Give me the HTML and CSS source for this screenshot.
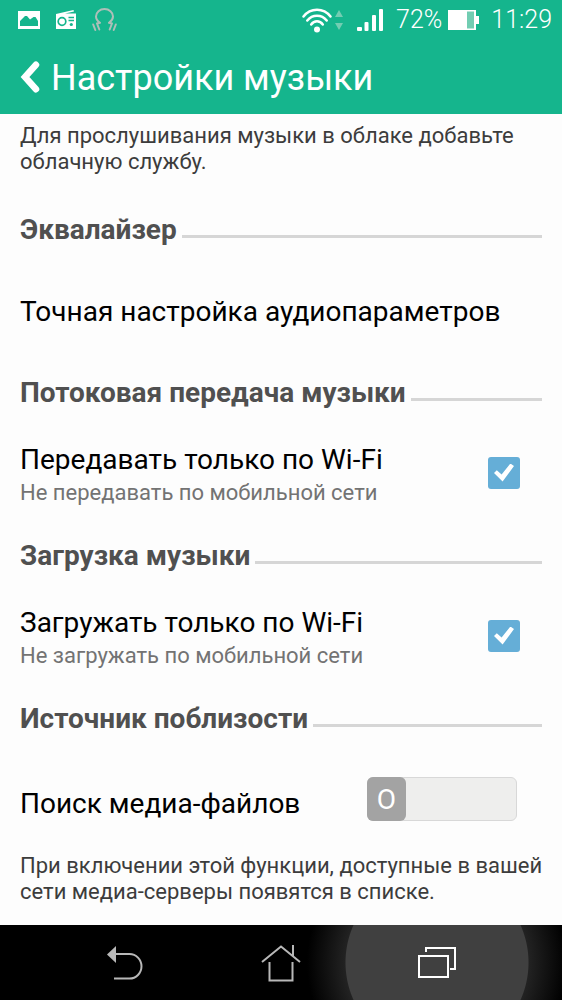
FILE: index.html
```html
<!DOCTYPE html>
<html lang="ru">
<head>
<meta charset="utf-8">
<meta name="viewport" content="width=device-width, initial-scale=1">
<title>Настройки музыки</title>
<link rel="stylesheet" href="styles.css">
</head>
<body>
<header class="top">
  <div class="status">
    <div class="status-left">
      <svg width="22" height="18" viewBox="0 0 22 18" aria-hidden="true"><path fill="#fff" fill-rule="evenodd" d="M0 0h22v18H0zM2 15h18v-5l-2.500-4h-2L12 8.500 9 5H7l-5 5z"/></svg>
      <svg width="20" height="20" viewBox="0 0 20 20" aria-hidden="true"><path fill="#fff" d="M0 4 17.500 0l.5 1.500L9 3.500h11V19H0z"/><circle cx="6" cy="11.500" r="3.800" fill="none" stroke="#15b58d" stroke-width="1.700"/><path stroke="#15b58d" stroke-width="1.300" d="M12.500 7.500h5.500M12.500 10.500h5.500"/><circle cx="15.300" cy="14.500" r="1.600" fill="#15b58d"/></svg>
      <svg width="25" height="24" viewBox="0 0 25 24" fill="none" stroke="#aebfb8" stroke-width="2" stroke-linecap="round" stroke-linejoin="round" aria-hidden="true"><path d="M7.300 21.500 5 15.500l3-.7C5.500 13 4 11 4 8.500a8.500 7.500 0 0 1 17 0c0 2.500-1.500 4.500-4 6.300l3 .7-2.300 6M3.300 22 1.200 16.500M21.700 22l2.100-5.500"/></svg>
    </div>
    <div class="status-right">
      <svg width="41" height="25" viewBox="0 0 41 25" aria-hidden="true"><g fill="none" stroke="#fff" stroke-width="2.500" stroke-linecap="round"><path d="M1.500 8.500C8.500-.5 21.500-.5 28.500 8.500M5.300 12.500c5-6.500 14.400-6.500 19.400 0M9.200 16.500c3-4.200 8.600-4.200 11.600 0"/></g><circle cx="15" cy="21.500" r="3" fill="#fff"/><path fill="#72cdb2" d="m33 9 4-7 4 7zm0 6h8l-4 7z"/></svg>
      <svg class="signal" width="26" height="24" viewBox="0 0 26 24" fill="#fff" aria-hidden="true"><rect y="19" width="5" height="4" rx="1"/><rect x="7.500" y="14" width="4" height="9" rx="1"/><rect x="15" y="7" width="4" height="16" rx="1"/><rect x="22" y="1" width="4" height="22" rx="1"/></svg>
      <span>72%</span>
      <svg class="battery" width="31" height="22" viewBox="0 0 31 22" aria-hidden="true"><path fill="#fff" d="M0 1h28v6h3v8h-3v6H0z"/><path fill="#72cdb2" d="M19 2.500h7v17h-7z"/></svg>
      <time>11:29</time>
    </div>
  </div>
  <div class="titlebar">
    <button class="back" type="button" aria-label="Назад"><svg width="20" height="32" viewBox="0 0 20 32" fill="none" stroke="#fff" stroke-width="6.500" stroke-linecap="round" stroke-linejoin="miter"><path d="M16 3.800 5 16l11 12.200"/></svg></button>
    <h1 class="title">Настройки музыки</h1>
  </div>
</header>
<main class="content">
  <p class="note intro">Для прослушивания музыки в облаке добавьте облачную службу.</p>
  <section>
    <h2 class="heading">Эквалайзер</h2>
    <button class="row link-row" type="button">Точная настройка аудиопараметров</button>
  </section>
  <section>
    <h2 class="heading">Потоковая передача музыки</h2>
    <div class="row">
      <div class="labels"><label class="label" for="stream">Передавать только по Wi-Fi</label><span class="sub" id="stream-sub">Не передавать по мобильной сети</span></div>
      <input class="check" type="checkbox" id="stream" aria-describedby="stream-sub" checked>
    </div>
  </section>
  <section>
    <h2 class="heading">Загрузка музыки</h2>
    <div class="row">
      <div class="labels"><label class="label" for="load">Загружать только по Wi-Fi</label><span class="sub" id="load-sub">Не загружать по мобильной сети</span></div>
      <input class="check" type="checkbox" id="load" aria-describedby="load-sub" checked>
    </div>
  </section>
  <section>
    <h2 class="heading">Источник поблизости</h2>
    <div class="row search-row">
      <label class="label" for="search">Поиск медиа-файлов</label>
      <button class="switch" id="search" type="button" role="switch" aria-checked="false"><span class="knob">O</span></button>
    </div>
    <p class="note">При включении этой функции, доступные в вашей сети медиа-серверы появятся в списке.</p>
  </section>
</main>
<nav class="nav" aria-label="Навигация">
  <button class="nav-button" type="button" aria-label="Назад"><svg width="40" height="36" viewBox="0 0 40 36" fill="none" stroke="#b8b8b8" stroke-width="2" aria-hidden="true"><path d="M9 9h15.500a12 12.300 0 0 1 0 24.600H9"/><path fill="#b8b8b8" stroke="none" d="M2 9.500 11 1v17z"/></svg></button>
  <button class="nav-button" type="button" aria-label="Домой"><svg width="40" height="38" viewBox="0 0 40 38" fill="none" stroke="#b8b8b8" stroke-width="2" aria-hidden="true"><path d="M1 18 20 2.500 39 18M32 12V1M8.500 18v18.500h23V18"/></svg></button>
  <button class="nav-button active" type="button" aria-label="Недавние приложения"><svg width="40" height="34" viewBox="0 0 40 34" fill="none" stroke="#fff" stroke-width="2" aria-hidden="true"><path d="M2 10h29v21H2zM9 6V2h29v21h-5"/></svg></button>
</nav>
</body>
</html>
```
FILE: styles.css
```css
* { box-sizing: border-box; }
body {
  margin: 0;
  min-height: 100vh;
  display: flex;
  flex-direction: column;
  background: #fdfdfd;
  color: #000;
  font-family: Roboto, "Noto Sans", sans-serif;
}
h1, h2, p { margin: 0; }
button {
  padding: 0;
  border: 0;
  background: none;
  color: inherit;
  font: inherit;
}
svg { display: block; flex: none; }

.top { background: #15b58d; color: #fff; }
.status {
  display: flex;
  justify-content: space-between;
  align-items: center;
  height: 40px;
  padding: 0 10px 0 18px;
}
.status-left { display: flex; align-items: center; gap: 16px; }
.status-right {
  display: flex;
  align-items: center;
  font-size: 25px;
  line-height: 30px;
  font-weight: 300;
}
.signal { margin: 0 13px 0 14px; }
.battery { margin: 0 12px 0 6px; }
.titlebar {
  display: flex;
  align-items: center;
  gap: 11px;
  height: 74px;
  padding: 0 20px;
}
.title { padding-top: 2px; font-size: 36px; line-height: 44px; font-weight: 400; }

.content { flex: 1; padding: 9px 20px 20px; }
.note {
  margin-right: -10px;
  color: #3c3c3c;
  font-size: 22px;
  line-height: 26px;
}
.intro { margin-bottom: 39px; }
.heading {
  display: flex;
  align-items: center;
  gap: 5px;
  color: #505050;
  font-size: 28px;
  line-height: 32px;
  font-weight: 700;
}
.heading::after {
  content: "";
  flex: 1;
  height: 3px;
  margin-top: 12px;
  background: #d6d6d6;
}
.row {
  display: flex;
  align-items: center;
  justify-content: space-between;
  width: 100%;
  min-height: 131px;
  font-size: 28px;
  line-height: 34px;
}
.link-row { text-align: left; }
.labels { display: flex; flex-direction: column; gap: 2px; }
.sub { color: #737373; font-size: 22px; line-height: 28px; }
.check {
  appearance: none;
  display: grid;
  place-items: center;
  width: 32px;
  height: 32px;
  margin: 0 22px 4px 0;
  border-radius: 3px;
  background: #65aed7;
}
.check:checked::after {
  content: "";
  width: 20px;
  height: 18px;
  background: #fff;
  clip-path: polygon(0 53%, 14% 38%, 38% 61%, 82% 0, 100% 14%, 43% 100%);
}
.search-row {
  align-items: flex-end;
  min-height: 118px;
  padding-bottom: 32px;
}
.switch {
  display: flex;
  width: 150px;
  height: 44px;
  margin-right: 25px;
  border: 1px solid #d8d8d8;
  border-radius: 6px;
  background: #eeeeed;
}
.knob {
  width: 39px;
  margin: -1px;
  border-radius: 6px;
  background: #a3a3a3;
  color: #fff;
  font-size: 28px;
  line-height: 46px;
  font-weight: 400;
  text-align: center;
}

.nav {
  display: grid;
  grid-template-columns: repeat(3, 156px);
  justify-content: center;
  height: 75px;
  overflow: hidden;
  background: #000;
}
.nav-button { display: grid; place-items: center; }
.active {
  background: radial-gradient(circle, #404040 0 91px, #222 92px, #000 130px);
  margin: 0 -52px;
}
```
